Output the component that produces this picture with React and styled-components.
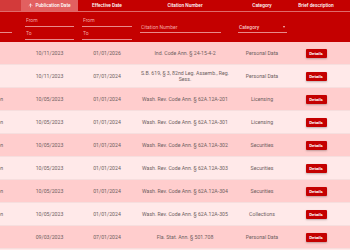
import React, { useEffect, useRef } from "react";
import styled, { createGlobalStyle } from "styled-components";
import { ArrowUp } from "lucide-react";

const Global = createGlobalStyle`
	html, body {
		margin: 0;
		padding: 0;
		background: #ffffff;
		font-family: Roboto, "Liberation Sans", sans-serif;
	}
`;

const Scroller = styled.div`
	width: 350px;
	height: 250px;
	overflow: hidden;
	background: #ffe9e9;
`;

const Table = styled.table`
	border-collapse: collapse;
	table-layout: fixed;
	width: 405px;
`;

const Head = styled.th`
	height: 11px;
	padding: 0;
	font-size: 4.8px;
	font-weight: 500;
	color: #ffffff;
	text-align: center;
	background: ${(props) =>
		props.sorted ? "#e26060" : props.dim ? "#d33a3a" : "#c40000"};
	border-bottom: 1px solid #e06a6a;
	white-space: nowrap;
`;

const HeadInner = styled.span`
	display: inline-flex;
	align-items: center;
	gap: 2px;
`;

const FilterCell = styled.td`
	height: 30px;
	padding: 0 4px;
	background: #c40000;
	vertical-align: middle;
`;

const FilterStack = styled.div`
	display: flex;
	flex-direction: column;
	gap: 1px;
`;

const FilterInput = styled.input`
	display: block;
	width: ${(props) => props.width || "100%"};
	box-sizing: border-box;
	height: 12px;
	padding: 0 1px;
	border: none;
	border-bottom: 1px solid #e88a8a;
	background: transparent;
	font-family: inherit;
	font-size: 5px;
	color: #ffffff;
	outline: none;
	&::placeholder {
		color: #f2a5a5;
	}
`;

const SelectBox = styled.div`
	display: flex;
	align-items: center;
	justify-content: space-between;
	width: ${(props) => props.width};
	height: 12px;
	box-sizing: border-box;
	padding: 0 2px 0 1px;
	border-bottom: 1px solid #e88a8a;
	font-size: 5px;
	font-weight: 500;
	color: #f7c6c6;
`;

const Caret = styled.span`
	width: 0;
	height: 0;
	border-left: 1.5px solid transparent;
	border-right: 1.5px solid transparent;
	border-top: 2px solid #f7c6c6;
`;

const Row = styled.tr`
	background: ${(props) => (props.odd ? "#ffcdcd" : "#ffe9e9")};
	border-bottom: 1px solid #f6dede;
`;

const Cell = styled.td`
	height: 22px;
	padding: 0 3px;
	font-size: 5.2px;
	line-height: 6.5px;
	color: #6e5e5e;
	text-align: center;
	white-space: ${(props) => (props.wrap ? "normal" : "nowrap")};
	overflow: hidden;
`;

const DetailsButton = styled.button`
	width: 21px;
	height: 9px;
	padding: 0;
	border: none;
	border-radius: 1px;
	background: #c40000;
	color: #ffffff;
	font-family: inherit;
	font-size: 4.4px;
	font-weight: 700;
	box-shadow: 0 1px 2px rgba(0, 0, 0, 0.25);
`;

const rows = [
	["Indiana", "10/11/2023", "01/01/2026", "Ind. Code Ann. § 24-15-4-2", "Personal Data"],
	["Nevada", "10/11/2023", "07/01/2024", "S.B. 619, § 3, 82nd Leg. Assemb., Reg. Sess.", "Personal Data"],
	["Washington", "10/05/2023", "01/01/2024", "Wash. Rev. Code Ann. § 62A.12A-201", "Licensing"],
	["Washington", "10/05/2023", "01/01/2024", "Wash. Rev. Code Ann. § 62A.12A-301", "Licensing"],
	["Washington", "10/05/2023", "01/01/2024", "Wash. Rev. Code Ann. § 62A.12A-302", "Securities"],
	["Washington", "10/05/2023", "01/01/2024", "Wash. Rev. Code Ann. § 62A.12A-303", "Securities"],
	["Washington", "10/05/2023", "01/01/2024", "Wash. Rev. Code Ann. § 62A.12A-304", "Securities"],
	["Washington", "10/05/2023", "01/01/2024", "Wash. Rev. Code Ann. § 62A.12A-305", "Collections"],
	["Florida", "09/03/2023", "07/01/2024", "Fla. Stat. Ann. § 501.708", "Personal Data"],
];

const App = () => {
	const scroller = useRef(null);

	useEffect(() => {
		if (scroller.current) scroller.current.scrollLeft = 42;
	}, []);

	return (
		<>
			<Global />
			<Scroller ref={scroller}>
				<Table>
					<colgroup>
						<col style={{ width: 63 }} />
						<col style={{ width: 57 }} />
						<col style={{ width: 58 }} />
						<col style={{ width: 98 }} />
						<col style={{ width: 56 }} />
						<col style={{ width: 52 }} />
						<col style={{ width: 21 }} />
					</colgroup>
					<thead>
						<tr>
							<Head dim>State</Head>
							<Head sorted>
								<HeadInner>
									<ArrowUp size={5} strokeWidth={3} />
									Publication Date
								</HeadInner>
							</Head>
							<Head>Effective Date</Head>
							<Head>Citation Number</Head>
							<Head>Category</Head>
							<Head>Brief description</Head>
							<Head />
						</tr>
						<tr>
							<FilterCell>
								<FilterInput placeholder="State" width="50px" />
							</FilterCell>
							<FilterCell>
								<FilterStack>
									<FilterInput placeholder="From" />
									<FilterInput placeholder="To" />
								</FilterStack>
							</FilterCell>
							<FilterCell>
								<FilterStack>
									<FilterInput placeholder="From" />
									<FilterInput placeholder="To" />
								</FilterStack>
							</FilterCell>
							<FilterCell>
								<FilterInput placeholder="Citation Number" width="81px" />
							</FilterCell>
							<FilterCell>
								<SelectBox width="49px">
									Category
									<Caret />
								</SelectBox>
							</FilterCell>
							<FilterCell />
							<FilterCell />
						</tr>
					</thead>
					<tbody>
						{rows.map((r, i) => (
							<Row key={i} odd={i % 2 === 0}>
								<Cell>{r[0]}</Cell>
								<Cell>{r[1]}</Cell>
								<Cell>{r[2]}</Cell>
								<Cell wrap>{r[3]}</Cell>
								<Cell>{r[4]}</Cell>
								<Cell>
									<DetailsButton>Details</DetailsButton>
								</Cell>
								<Cell />
							</Row>
						))}
					</tbody>
				</Table>
			</Scroller>
		</>
	);
};

export default App;
